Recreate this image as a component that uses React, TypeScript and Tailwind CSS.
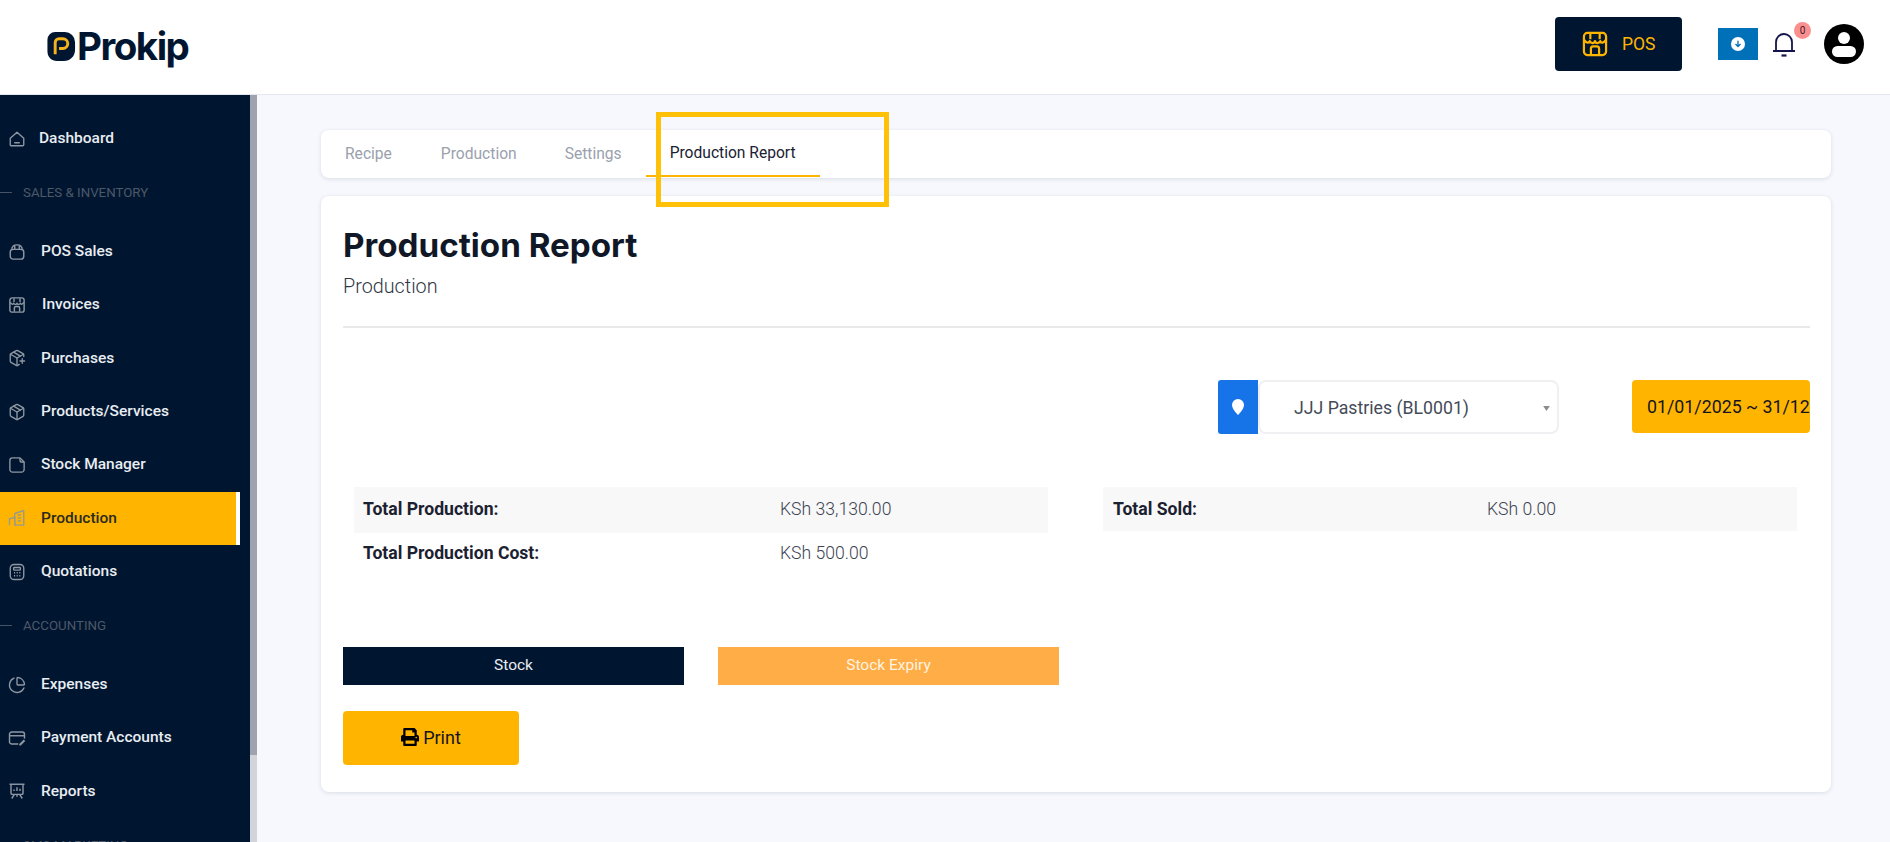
import React from 'react';
import { ChartPie, Package, PackagePlus } from 'lucide-react';
import { FaPrint } from 'react-icons/fa';

const iconCls = 'w-[18px] h-[18px]';

const HomeIcon = () => (
  <svg viewBox="0 0 24 24" fill="none" stroke="currentColor" strokeWidth="1.8" className={iconCls}>
    <path d="M3 11l9-8 9 8v8.500a1.500 1.500 0 0 1-1.500 1.500h-15A1.500 1.500 0 0 1 3 19.500z" strokeLinejoin="round" />
    <path d="M9 17h6" strokeLinecap="round" />
  </svg>
);

const BagIcon = () => (
  <svg viewBox="0 0 24 24" fill="none" stroke="currentColor" strokeWidth="1.9" className={iconCls}>
    <path d="M3 12a3.500 3.500 0 0 1 3.500-3.500h11A3.500 3.500 0 0 1 21 12v5.500a4 4 0 0 1-4 4H7a4 4 0 0 1-4-4z" />
    <path d="M5 9.500C5 5 8 2.500 12 2.500s7 2.500 7 7" />
    <path d="M9 3.500v5M15 3.500v5" />
  </svg>
);

const StoreIcon = ({ className = iconCls }: { className?: string }) => (
  <svg viewBox="0 0 24 24" fill="none" stroke="currentColor" strokeWidth="1.9" className={className}>
    <rect x="2.500" y="2.500" width="19" height="19" rx="3" />
    <path d="M3 8.500c1.500 3 4 3 4.500 1 .5 2 4 2.500 4.500 0 .5 2.500 4 2 4.500 0 .5 2 3 2 4.500-1" strokeLinejoin="round" />
    <path d="M8.500 21v-5a2 2 0 0 1 2-2h3a2 2 0 0 1 2 2v5" />
    <path d="M8 3v5M16 3v5" />
  </svg>
);

const NoteIcon = () => (
  <svg viewBox="0 0 24 24" fill="none" stroke="currentColor" strokeWidth="1.8" className={iconCls}>
    <path d="M6 2.500h10l5.500 5.500v10a3.500 3.500 0 0 1-3.500 3.500H6A3.500 3.500 0 0 1 2.500 18V6A3.500 3.500 0 0 1 6 2.500z" strokeLinejoin="round" />
    <path d="M16 2.500v3a2.500 2.500 0 0 0 2.500 2.500h3" />
  </svg>
);

const BuildingIcon = () => (
  <svg viewBox="0 0 24 24" fill="none" stroke="currentColor" strokeWidth="1.8" className={iconCls}>
    <path d="M2 21.500V13l7-2v10.500" />
    <path d="M9 21.500V6l12-4v19.500z" strokeLinejoin="round" />
    <path d="M13 8h4M13 12h4M13 16h4" />
  </svg>
);

const CalcIcon = () => (
  <svg viewBox="0 0 24 24" fill="none" stroke="currentColor" strokeWidth="1.8" className={iconCls}>
    <rect x="3" y="2" width="18" height="20" rx="5" />
    <rect x="7.500" y="6" width="9" height="3.500" rx="1" />
    <path d="M8 13h1.500M11.500 13H13M15 13h1.500M8 17h1.500M11.500 17H13M15 17h1.500" />
  </svg>
);

const CardIcon = () => (
  <svg viewBox="0 0 24 24" fill="none" stroke="currentColor" strokeWidth="1.9" className={iconCls}>
    <path d="M13 20H5a3 3 0 0 1-3-3V7a3 3 0 0 1 3-3h14a3 3 0 0 1 3 3v5" strokeLinecap="round" />
    <path d="M2 9h20" />
    <path d="M15 20l6-6 2 2-6 6h-2z" fill="currentColor" stroke="none" />
  </svg>
);

const BoardIcon = () => (
  <svg viewBox="0 0 24 24" fill="none" stroke="currentColor" strokeWidth="1.9" className={iconCls}>
    <path d="M2 3h20" />
    <path d="M4 3v12a1.500 1.500 0 0 0 1.500 1.500h13A1.500 1.500 0 0 0 20 15V3" />
    <path d="M8 12v-2M12 12V7M16 12V9" />
    <path d="M12 16.500v3M8.500 16.500L5 22M15.500 16.500L19 22" />
  </svg>
);

type Row =
  | { kind: 'link'; label: string; icon: React.ReactNode; gap?: string; active?: boolean }
  | { kind: 'section'; label: string };

const rows: Row[] = [
  { kind: 'link', label: 'Dashboard', icon: <HomeIcon />, gap: 'ml-[13px]' },
  { kind: 'section', label: 'SALES & INVENTORY' },
  { kind: 'link', label: 'POS Sales', icon: <BagIcon />, gap: 'ml-[15px]' },
  { kind: 'link', label: 'Invoices', icon: <StoreIcon />, gap: 'ml-[16px]' },
  { kind: 'link', label: 'Purchases', icon: <PackagePlus className={iconCls} strokeWidth={1.8} />, gap: 'ml-[15px]' },
  { kind: 'link', label: 'Products/Services', icon: <Package className={iconCls} strokeWidth={1.8} />, gap: 'ml-[15px]' },
  { kind: 'link', label: 'Stock Manager', icon: <NoteIcon />, gap: 'ml-[15px]' },
  { kind: 'link', label: 'Production', icon: <BuildingIcon />, gap: 'ml-[15px]', active: true },
  { kind: 'link', label: 'Quotations', icon: <CalcIcon />, gap: 'ml-[15px]' },
  { kind: 'section', label: 'ACCOUNTING' },
  { kind: 'link', label: 'Expenses', icon: <ChartPie className={iconCls} strokeWidth={1.8} />, gap: 'ml-[15px]' },
  { kind: 'link', label: 'Payment Accounts', icon: <CardIcon />, gap: 'ml-[15px]' },
  { kind: 'link', label: 'Reports', icon: <BoardIcon />, gap: 'ml-[15px]' },
  { kind: 'section', label: 'SMS MARKETING' },
];

const Sidebar = () => (
  <aside className="w-[257px] shrink-0 flex overflow-hidden">
    <div className="w-[250px] bg-[#001630] pt-[17px] overflow-hidden">
      {rows.map((row) =>
        row.kind === 'section' ? (
          <div key={row.label} className="h-[59.7px] flex items-center pb-[5px] pr-[10px]">
            <span className="w-3 h-px bg-[#475264]" />
            <span className="ml-[11px] text-[13.3px] leading-none text-[#4d5868]">{row.label}</span>
          </div>
        ) : (
          <div
            key={row.label}
            className={
              row.active
                ? 'h-[53.33px] w-[240px] flex items-center pl-[8px] bg-[#ffb400] border-r-[4px] border-white text-[#2b2b1e] font-medium text-[15.5px]'
                : 'h-[53.33px] flex items-center pl-[8px] text-[#e9edf2] font-medium text-[15.5px]'
            }
          >
            <span className={row.active ? 'text-[#9b9b8c]' : 'text-[#8f97a3]'}>{row.icon}</span>
            <span className={row.gap}>{row.label}</span>
          </div>
        ),
      )}
    </div>
    <div className="w-[7px] bg-[#d2d4da]">
      <div className="h-[660px] bg-[#9fa3ae]" />
    </div>
  </aside>
);

const Header = () => (
  <header className="h-[95px] shrink-0 bg-white border-b border-[#e6e6ee] flex items-center pl-[46px] pr-[26px]">
    <div className="flex items-center pb-[2px]">
      <svg viewBox="0 0 30 32" className="w-[30px] h-[31px]">
        <path d="M9 1h10a10.500 10.500 0 0 1 10.500 10.500v8A11.500 11.500 0 0 1 18 31H11C5 31 1 27 1 21V9a8 8 0 0 1 8-8z" fill="#001630" />
        <path d="M9 24V12a4 4 0 0 1 4-4h4a5 5 0 0 1 0 10h-4" fill="none" stroke="#f6b21b" strokeWidth="3" />
      </svg>
      <span className="ml-[1px] font-['Inter',sans-serif] font-bold text-[38.500px] leading-none tracking-[-1.500px] text-[#001630]">Prokip</span>
    </div>
    <div className="ml-auto flex items-center pb-[6px]">
      <div className="w-[127px] h-[54px] rounded-[4px] bg-[#001630] flex items-center pl-[26px] text-[#ffb400]">
        <StoreIcon className="w-[28px] h-[28px]" />
        <span className="ml-[13px] text-[17.500px]">POS</span>
      </div>
      <div className="ml-[36px] w-10 h-8 bg-[#0071b9] flex items-center justify-center">
        <span className="w-[14px] h-[14px] rounded-full bg-white flex items-center justify-center">
          <svg viewBox="0 0 12 12" className="w-[10px] h-[10px]" fill="none" stroke="#0071b9" strokeWidth="1.600">
            <path d="M6 2v7M3 6l3 3 3-3" />
          </svg>
        </span>
      </div>
      <div className="relative ml-[14px] w-[24px] h-[26px] text-[#14144b]">
        <svg viewBox="0 0 24 26" fill="none" stroke="currentColor" strokeWidth="1.800" className="w-full h-full">
          <path d="M1 20h22M4 20V11a8 8 0 0 1 16 0v9" />
          <path d="M9.500 24.500h5" strokeWidth="2.200" />
        </svg>
        <span className="absolute top-[-9px] right-[-15px] w-[17px] h-[17px] rounded-full bg-[#fb8f8f] text-[#3a2020] text-[10px] flex items-center justify-center">0</span>
      </div>
      <div className="ml-[28px] w-10 h-10 rounded-full bg-black overflow-hidden relative">
        <span className="absolute left-[14px] top-[8px] w-[12px] h-[12px] rounded-full bg-white" />
        <span className="absolute left-[8px] top-[22px] w-[24px] h-[11px] rounded-[6px] bg-white" />
      </div>
    </div>
  </header>
);

const Tabs = () => (
  <div className="relative h-[48px] bg-white rounded-[8px] shadow-[0_1px_4px_rgba(0,22,48,0.12)] flex items-start pl-[24px] text-[15.600px]">
    <span className="mt-[13px] text-[#9aa1ad]">Recipe</span>
    <span className="ml-[49px] mt-[13px] text-[#9aa1ad]">Production</span>
    <span className="ml-[48px] mt-[13px] text-[#9aa1ad]">Settings</span>
    <span className="ml-[24px] h-[47px] px-[24px] pt-[12px] border-b-[2px] border-[#ffb400] text-[#1a2233]">Production Report</span>
    {/* highlight box drawn over the tab */}
    <div className="absolute left-[335px] top-[-18px] w-[233px] h-[95px] border-[5px] border-[#ffc107]" />
  </div>
);

const StatRow = ({ label, value, striped }: { label: string; value: string; striped?: boolean }) => (
  <div className={striped ? 'h-[46px] flex items-center bg-[#f8f8f8] pb-[1px]' : 'h-[41px] flex items-center'}>
    <span className="w-[426px] pl-[9px] font-bold text-[17.600px] text-[#1b2130]">{label}</span>
    <span className="text-[17.600px] font-light text-[#3d4452]">{value}</span>
  </div>
);

export default function App() {
  return (
    <div className="h-screen w-full overflow-hidden flex flex-col bg-[#f6f8fd] font-['Roboto',sans-serif]">
      <Header />
      <div className="flex flex-1 min-h-0">
        <Sidebar />
        <main className="flex-1 min-w-0 pl-[64px] pr-[59px] pt-[35px]">
          <Tabs />
          <section className="mt-[18px] h-[596px] bg-white rounded-[8px] shadow-[0_1px_4px_rgba(0,22,48,0.12)] pl-[22px] pr-[21px] pt-[26px]">
            <h1 className="font-['Inter',sans-serif] font-bold text-[33.200px] leading-[46px] text-[#101828]">Production Report</h1>
            <p className="mt-[5px] text-[19.800px] leading-[28px] font-light text-[#2f3644]">Production</p>
            <hr className="mt-[25px] border-t-[2px] border-[#e9e9e9]" />
            <div className="mt-[52px] flex items-start justify-end">
              <div className="flex w-[341px] h-[54px]">
                <span className="w-[40px] bg-[#1673e8] rounded-l-[3px] flex items-center justify-center">
                  <svg viewBox="0 0 12 16" className="w-[12px] h-[16px]" fill="white">
                    <path d="M6 0a6 6 0 0 1 6 6c0 3.500-4 8-6 10C4 14 0 9.500 0 6a6 6 0 0 1 6-6z" />
                  </svg>
                </span>
                <div className="flex-1 border-2 border-[#f0f0f2] rounded-[8px] flex items-center pl-[34px] pr-[7px] pt-[2px] text-[17.700px] text-[#444b57]">
                  <span>JJJ Pastries (BL0001)</span>
                  <svg viewBox="0 0 8 6" className="ml-auto w-[7px] h-[5px]" fill="#8c8c8c"><path d="M0 0h8L4 6z" /></svg>
                </div>
              </div>
              <div className="ml-[73px] w-[178px] h-[53px] rounded-[4px] bg-[#ffb400] flex items-center pl-[15px] pt-[1px] overflow-hidden whitespace-nowrap text-[17.800px] text-[#14141e]">
                01/01/2025 ~ 31/12/2025
              </div>
            </div>
            <div className="mt-[53px] flex pl-[11px] pr-[11px] gap-[55px]">
              <div className="w-[694px]">
                <StatRow striped label="Total Production:" value="KSh 33,130.00" />
                <StatRow label="Total Production Cost:" value="KSh 500.00" />
              </div>
              <div className="w-[694px]">
                <div className="h-[44px] flex items-center bg-[#f8f8f8]">
                  <span className="w-[384px] pl-[10px] font-bold text-[17.600px] text-[#1b2130]">Total Sold:</span>
                  <span className="text-[17.600px] font-light text-[#3d4452]">KSh 0.00</span>
                </div>
              </div>
            </div>
            <div className="mt-[73px] flex gap-[34px] text-[15.500px]">
              <div className="w-[341px] h-[38px] bg-[#001630] text-[#e9edf2] flex items-center justify-center">Stock</div>
              <div className="w-[341px] h-[38px] bg-[#ffad47] text-[#fff3e0] flex items-center justify-center">Stock Expiry</div>
            </div>
            <div className="mt-[26px] w-[176px] h-[54px] rounded-[4px] bg-[#ffb400] flex items-center justify-center pb-[2px] text-[18px] text-[#14141e]">
              <FaPrint className="w-[18px] h-[18px] mr-[4px] text-black" />
              Print
            </div>
          </section>
        </main>
      </div>
    </div>
  );
}
